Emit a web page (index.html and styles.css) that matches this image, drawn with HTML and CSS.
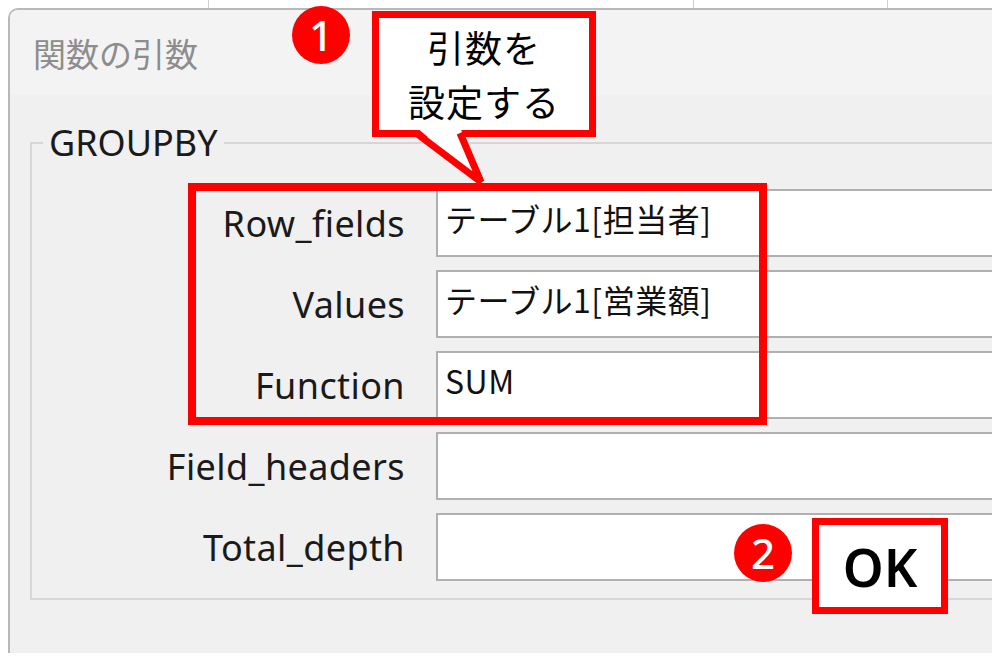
FILE: index.html
```html
<!DOCTYPE html>
<html lang="ja">
<head>
<meta charset="utf-8">
<title>関数の引数</title>
<link rel="stylesheet" href="styles.css">
</head>
<body>
<div class="page">
  <div class="colstrip">
    <span class="col c1"></span><span class="col c2"></span><span class="col c3"></span>
  </div>
  <div class="dialog">
    <div class="titlebar">関数の引数</div>
    <div class="content">
      <fieldset class="group">
        <legend class="legend">GROUPBY</legend>
        <div class="rows">
          <div class="label">Row_fields</div>
          <div class="field">テーブル1[担当者]</div>
          <div class="label">Values</div>
          <div class="field">テーブル1[営業額]</div>
          <div class="label">Function</div>
          <div class="field">SUM</div>
          <div class="label">Field_headers</div>
          <div class="field"></div>
          <div class="label">Total_depth</div>
          <div class="field"></div>
        </div>
      </fieldset>
    </div>
  </div>

  <div class="highlight"></div>
  <div class="callout"><p class="callout-text">引数を<br>設定する</p></div>
  <svg class="tail" width="100" height="66" viewBox="0 0 100 66">
    <polygon points="16,2 60,2 82,58" fill="#ffffff"/>
    <polyline points="16,8 81,57 60,8" fill="none" stroke="#ff0000" stroke-width="7" stroke-linejoin="bevel"/>
  </svg>
  <div class="badge b1">1</div>
  <div class="badge b2">2</div>
  <div class="okbox">OK</div>
</div>
</body>
</html>
```
FILE: styles.css
```css
html, body {
  margin: 0;
  padding: 0;
  background: #ffffff;
}
body {
  font-family: "Noto Sans", "Noto Sans CJK JP", sans-serif;
  overflow: hidden;
}
.page {
  position: relative;
  width: 1000px;
  height: 658px;
  overflow: hidden;
}
.colstrip {
  display: flex;
  height: 8px;
}
.col {
  display: block;
  height: 8px;
  border-right: 1px solid #cfcfcf;
  box-sizing: border-box;
}
.c1 { width: 209px; }
.c2 { width: 485px; }
.c3 { width: 194px; }

.dialog {
  margin-left: 8px;
  width: 984px;
  height: 645px;
  box-sizing: border-box;
  border-top: 2px solid #b8b8b8;
  border-left: 2px solid #b8b8b8;
  border-top-left-radius: 10px;
  background: #f0f0f0;
  overflow: hidden;
  display: flex;
  flex-direction: column;
}
.titlebar {
  height: 85px;
  flex: none;
  background: #f3f3f3;
  padding-left: 23px;
  display: flex;
  align-items: center;
  font-family: "Noto Sans CJK JP", sans-serif;
  font-size: 33px;
  color: #8d8d8d;
}
.content {
  flex: 1;
  padding-left: 20px;
}
.group {
  margin: 23px 0 0 0;
  width: 1000px;
  padding: 0 0 17px 0;
  border: 2px solid #d6d6d6;
  box-sizing: border-box;
}
.legend {
  margin-left: 11px;
  padding: 0 6px;
  font-family: "Noto Sans", sans-serif;
  font-size: 36px;
  line-height: 49px;
  color: #1a1a1a;
}
.rows {
  margin-top: 22px;
  display: grid;
  grid-template-columns: 373px 1fr;
  column-gap: 31px;
  row-gap: 13px;
  grid-auto-rows: 68px;
}
.label {
  align-self: center;
  text-align: right;
  font-family: "Noto Sans", sans-serif;
  font-size: 36px;
  letter-spacing: 0.4px;
  line-height: 49px;
  color: #1a1a1a;
}
.field {
  box-sizing: border-box;
  height: 68px;
  background: #ffffff;
  border: 2px solid #b0b0b0;
  padding: 4px 7px 0;
  font-family: "Noto Sans CJK JP", sans-serif;
  font-size: 32px;
  letter-spacing: 0.5px;
  line-height: 46px;
  color: #111111;
  white-space: nowrap;
}

.highlight {
  position: absolute;
  left: 188px;
  top: 183px;
  width: 579px;
  height: 242px;
  box-sizing: border-box;
  border: 8px solid #ff0000;
}
.callout {
  position: absolute;
  left: 372px;
  top: 11px;
  width: 224px;
  height: 126px;
  box-sizing: border-box;
  border: 7px solid #ff0000;
  background: #ffffff;
  display: flex;
  align-items: center;
  justify-content: center;
}
.callout-text {
  margin: 0;
  text-align: center;
  font-family: "Noto Sans CJK JP", sans-serif;
  font-size: 37px;
  letter-spacing: 1px;
  line-height: 54px;
  color: #000000;
}
.tail {
  position: absolute;
  left: 400px;
  top: 125px;
}
.badge {
  position: absolute;
  width: 58px;
  height: 58px;
  border-radius: 50%;
  background: #ff0000;
  color: #ffffff;
  font-family: "Noto Sans", sans-serif;
  font-size: 42px;
  font-weight: 500;
  line-height: 58px;
  text-align: center;
}
.b1 { left: 292px; top: 6px; }
.b2 { left: 734px; top: 524px; }
.okbox {
  position: absolute;
  left: 812px;
  top: 518px;
  width: 136px;
  height: 96px;
  box-sizing: border-box;
  border: 7px solid #ff0000;
  background: #ffffff;
  display: flex;
  align-items: center;
  justify-content: center;
  font-family: "Noto Sans", sans-serif;
  font-size: 52px;
  font-weight: 600;
  color: #000000;
}
```
